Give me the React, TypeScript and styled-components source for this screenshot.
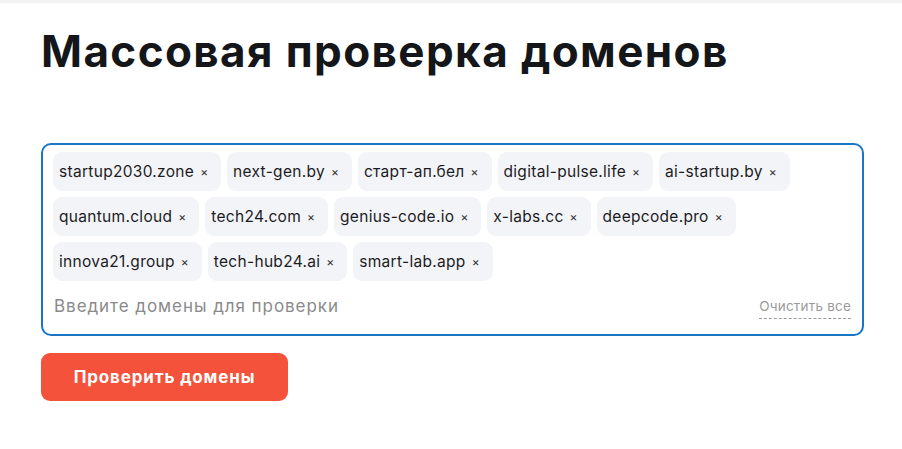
import React from "react";
import styled, { createGlobalStyle } from "styled-components";

const Global = createGlobalStyle`
  html, body { margin: 0; padding: 0; background: #fff; }
  body { font-family: Inter, "Noto Sans", sans-serif; color: #141414; }
`;

const TopStrip = styled.div`
  height: 3px;
  background: #f3f3f3;
`;

const Page = styled.main`
  padding: 0 38px 0 41px;
`;

const Title = styled.h1`
  margin: 22px 0 0;
  font-size: 44px;
  line-height: 52px;
  font-weight: 700;
  letter-spacing: 1.4px;
  color: #14161a;
`;

const Field = styled.div`
  margin-top: 66px;
  border: 2px solid #1877c4;
  border-radius: 10px;
  padding: 7px 10px 0 10px;
  display: flex;
  flex-direction: column;
`;

const Chips = styled.div`
  display: flex;
  flex-wrap: wrap;
  column-gap: 6px;
  row-gap: 6px;
`;

const Chip = styled.span`
  display: inline-flex;
  align-items: center;
  height: 39px;
  padding: 0 13px 0 6px;
  background: #f3f4f8;
  border-radius: 9px;
  font-size: 15.5px;
  letter-spacing: 0.3px;
  color: #1c1c1e;
`;

const Close = styled.span`
  margin-left: 6px;
  font-size: 12px;
  letter-spacing: 0;
  color: #333;
`;

const InputRow = styled.div`
  display: flex;
  align-items: center;
  justify-content: space-between;
  height: 53px;
`;

const Placeholder = styled.span`
  font-size: 17px;
  letter-spacing: 0.95px;
  color: #8a8a8a;
  padding-left: 1px;
  margin-top: -3px;
`;

const Clear = styled.span`
  font-size: 13.5px;
  letter-spacing: 0.2px;
  color: #9a9a9a;
  border-bottom: 1px dashed #9a9a9a;
  padding-bottom: 4px;
  margin-top: 2px;
  margin-right: 1px;
`;

const Button = styled.button`
  margin-top: 17px;
  width: 247px;
  height: 48px;
  border: none;
  border-radius: 9px;
  background: #f4523a;
  color: #fff;
  font-family: Inter, sans-serif;
  font-size: 17px;
  letter-spacing: 0.85px;
  font-weight: 700;
`;

const domains = [
  "startup2030.zone",
  "next-gen.by",
  "старт-ап.бел",
  "digital-pulse.life",
  "ai-startup.by",
  "quantum.cloud",
  "tech24.com",
  "genius-code.io",
  "x-labs.cc",
  "deepcode.pro",
  "innova21.group",
  "tech-hub24.ai",
  "smart-lab.app",
];

export default function App() {
  return (
    <>
      <Global />
      <TopStrip />
      <Page>
        <Title>Массовая проверка доменов</Title>
        <Field>
          <Chips>
            {domains.map((d) => (
              <Chip key={d}>
                {d}
                <Close>×</Close>
              </Chip>
            ))}
          </Chips>
          <InputRow>
            <Placeholder>Введите домены для проверки</Placeholder>
            <Clear>Очистить все</Clear>
          </InputRow>
        </Field>
        <Button>Проверить домены</Button>
      </Page>
    </>
  );
}
